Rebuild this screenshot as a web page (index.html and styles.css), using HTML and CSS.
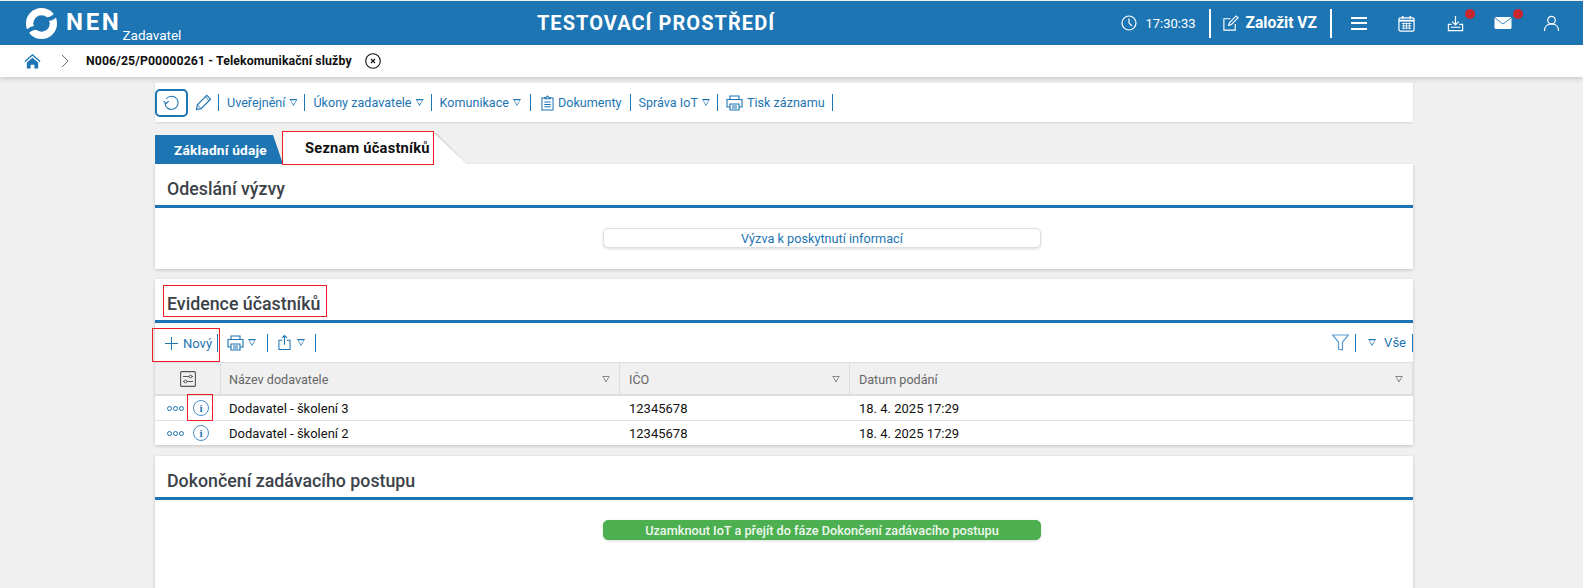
FILE: index.html
```html
<!DOCTYPE html>
<html lang="cs">
  <head>
    <meta charset="UTF-8" />
    <title>NEN Zadavatel</title>
    <link rel="stylesheet" href="styles.css">
  </head>
  <body>
    <header class="topbar">
      <div class="brand">
        <svg class="logo" viewBox="0 0 34 34" width="33" height="33">
          <circle cx="17" cy="17" r="16" fill="#fff"/>
          <circle cx="17" cy="17" r="8.500" fill="#1d75b3"/>
          <path d="M22 10.500Q28 11 33 3L34 9Q28 15 24 14z" fill="#1d75b3"/>
          <path d="M12 23.500Q6 23 1 31L0 25Q6 19 10 20z" fill="#1d75b3"/>
        </svg>
        <span class="brand-name">NEN</span>
        <span class="brand-role">Zadavatel</span>
      </div>
      <div class="env">TESTOVACÍ PROSTŘEDÍ</div>
      <div class="top-tools">
        <svg class="clock" viewBox="0 0 16 16" width="16" height="16"><circle cx="8" cy="8" r="7" fill="none" stroke="#fff" stroke-width="1.2"/><path d="M8 3.500V8l3 3" fill="none" stroke="#fff" stroke-width="1.2"/></svg>
        <span class="time">17:30:33</span>
        <span class="top-sep sep-a"></span>
        <svg class="new-icon" viewBox="0 0 18 18" width="17" height="17"><path d="M14 9.500V16H2V4h7" fill="none" stroke="#fff" stroke-width="1.2"/><path d="M7 11l1-3 7-7 2 2-7 7z" fill="none" stroke="#fff" stroke-width="1.2"/></svg>
        <span class="new-vz">Založit VZ</span>
        <span class="top-sep sep-b"></span>
        <span class="burger"><i></i><i></i><i></i></span>
        <svg class="cal" viewBox="0 0 18 18" width="17" height="17"><rect x="1" y="3" width="16" height="14" rx="1.500" fill="none" stroke="#fff" stroke-width="1.3"/><path d="M1 6h16" stroke="#fff" stroke-width="2"/><path d="M5 1v3M13 1v3" stroke="#fff" stroke-width="1.6"/><path d="M4 9h10M4 11.500h10M4 14h10M6 8v7M9 8v7M12 8v7" stroke="#fff" stroke-width=".9"/></svg>
        <span class="badged dl">
          <svg viewBox="0 0 18 18" width="17" height="17"><path d="M9 1v9M5.500 7L9 10.500 12.500 7" fill="none" stroke="#fff" stroke-width="1.3"/><path d="M5 10H1.500v6.500h15V10H13" fill="none" stroke="#fff" stroke-width="1.3"/><path d="M4 13h10" stroke="#fff" stroke-width="1.100"/></svg>
          <i class="dot"></i>
        </span>
        <span class="badged mail">
          <svg viewBox="0 0 18 14" width="18" height="14"><rect x=".5" y="1" width="17" height="12" rx="1.500" fill="#fff"/><path d="M1 2l8 6 8-6" fill="none" stroke="#1d75b3" stroke-width=".9"/></svg>
          <i class="dot"></i>
        </span>
        <svg class="user" viewBox="0 0 18 18" width="17" height="17"><circle cx="9" cy="5.500" r="4" fill="none" stroke="#fff" stroke-width="1.3"/><path d="M1.500 17c0-4.500 3-7.500 7.500-7.500s7.500 3 7.500 7.500" fill="none" stroke="#fff" stroke-width="1.3"/></svg>
      </div>
    </header>

    <nav class="crumbs">
      <svg class="home" viewBox="0 0 18 16" width="17" height="16"><path d="M9 .5L.5 8l1 1L9 2.500 16.500 9l1-1z" fill="#1d75b3"/><path d="M3 9.500L9 4.500l6 5V16h-4v-4H7v4H3z" fill="#1d75b3"/></svg>
      <svg class="crumb-arrow" viewBox="0 0 8 14" width="8" height="14"><path d="M1 1l6 6-6 6" fill="none" stroke="#666" stroke-width="1"/></svg>
      <span class="crumb-text">N006/25/P00000261 - Telekomunikační služby</span>
      <svg class="crumb-close" viewBox="0 0 16 16" width="16" height="16"><circle cx="8" cy="8" r="7.300" fill="none" stroke="#111" stroke-width="1.100"/><path d="M6 6l4 4M10 6l-4 4" stroke="#111" stroke-width="1.100"/></svg>
    </nav>

    <main class="content">
      <div class="actions">
        <button class="refresh">
          <svg viewBox="0 0 18 18" width="17" height="17"><path d="M3.500 5A7 7 0 1 1 2 9.500" fill="none" stroke="#1d75b3" stroke-width="1.100"/><path d="M.5 7.500L3.500 10 6 7.500" fill="none" stroke="#1d75b3" stroke-width="1.100"/></svg>
        </button>
        <svg class="pencil" viewBox="0 0 18 18" width="17" height="17"><path d="M1.500 16.500l1-5L12.500 1.500l4 4-10 10z" fill="none" stroke="#1d75b3" stroke-width="1.200"/><path d="M2.500 11.500l4 4M11 3l4 4" stroke="#1d75b3" stroke-width="1"/></svg>
        <span class="act">Uveřejnění <i class="tri"></i></span>
        <span class="act">Úkony zadavatele <i class="tri"></i></span>
        <span class="act act-komunikace">Komunikace <i class="tri"></i></span>
        <span class="act act-docs">
          <svg viewBox="0 0 14 17" width="13" height="16"><path d="M4 3H1v13h12V3h-3" fill="none" stroke="#1d75b3" stroke-width="1.100"/><path d="M4 4V2.500h1.500L7 1l1.500 1.500H10V4z" fill="none" stroke="#1d75b3" stroke-width="1.100"/><path d="M3.500 7.500h7M3.500 10h7M3.500 12.500h7" stroke="#1d75b3" stroke-width="1.100"/></svg>
          Dokumenty
        </span>
        <span class="act">Správa IoT <i class="tri"></i></span>
        <span class="act">
          <svg viewBox="0 0 17 16" width="17" height="16"><path d="M4 4V1h9v3M4 12H1V4.500h15V12h-3" fill="none" stroke="#1d75b3" stroke-width="1.100"/><path d="M4 9h9v6H4z" fill="#fff" stroke="#1d75b3" stroke-width="1.100"/><path d="M6 11h5M6 13h5" stroke="#1d75b3" stroke-width="1"/></svg>
          Tisk záznamu
        </span>
      </div>

      <div class="tabs">
        <div class="tab tab-blue">Základní údaje</div>
        <div class="tab tab-white marked">Seznam účastníků</div>
      </div>

      <section class="card card-first">
        <h2 class="card-title"><span>Odeslání výzvy</span></h2>
        <div class="card-btn-row">
          <button class="wide-btn">Výzva k poskytnutí informací</button>
        </div>
      </section>

      <section class="card card-grid">
        <h2 class="card-title"><span class="marked">Evidence účastníků</span></h2>
        <div class="grid-tools">
          <span class="tool tool-new marked">
            <svg viewBox="0 0 14 14" width="13" height="13"><path d="M7 0v14M0 7h14" stroke="#1d75b3" stroke-width="1.100"/></svg>
            Nový
          </span>
          <span class="tool tool-print">
            <svg viewBox="0 0 17 16" width="17" height="16"><path d="M4 4V1h9v3M4 12H1V4.500h15V12h-3" fill="none" stroke="#1d75b3" stroke-width="1.100"/><path d="M4 9h9v6H4z" fill="#fff" stroke="#1d75b3" stroke-width="1.100"/><path d="M6 11h5M6 13h5" stroke="#1d75b3" stroke-width="1"/></svg>
            <i class="tri"></i>
          </span>
          <span class="tool tool-export">
            <svg viewBox="0 0 14 17" width="13" height="17"><path d="M4.500 6H1v10h12V6H9.500" fill="none" stroke="#1d75b3" stroke-width="1.100"/><path d="M7 11V1M4.500 3.500L7 1l2.500 2.500" fill="none" stroke="#1d75b3" stroke-width="1.100"/></svg>
            <i class="tri"></i>
          </span>
          <span class="grid-tools-right">
            <svg class="funnel" viewBox="0 0 17 17" width="17" height="17"><path d="M.5 1h16l-6 7v8l-4-1V8z" fill="none" stroke="#5b9bd0" stroke-width="1.200"/></svg>
            <span class="tool-sep"></span>
            <i class="tri all-tri"></i>
            <span class="all">Vše</span>
          </span>
        </div>
        <div class="grid-head">
          <div class="cell cell-icons">
            <svg viewBox="0 0 16 16" width="16" height="16"><rect x=".6" y=".6" width="14.800" height="14.800" rx="1" fill="none" stroke="#555" stroke-width="1.100"/><path d="M3 5.500h6M12 5.500h1M3 10.500h1M7 10.500h6" stroke="#555"/><circle cx="10.500" cy="5.500" r="1.400" fill="none" stroke="#555"/><circle cx="5.500" cy="10.500" r="1.400" fill="none" stroke="#555"/></svg>
          </div>
          <div class="cell cell-name">Název dodavatele <i class="tri tri-gray"></i></div>
          <div class="cell cell-ico">IČO <i class="tri tri-gray"></i></div>
          <div class="cell cell-date">Datum podání <i class="tri tri-gray"></i></div>
        </div>
        <div class="grid-row">
          <div class="cell cell-icons">
            <span class="dots"><i></i><i></i><i></i></span>
            <span class="info marked-info">i</span>
          </div>
          <div class="cell cell-name">Dodavatel - školení 3</div>
          <div class="cell cell-ico">12345678</div>
          <div class="cell cell-date">18. 4. 2025 17:29</div>
        </div>
        <div class="grid-row">
          <div class="cell cell-icons">
            <span class="dots"><i></i><i></i><i></i></span>
            <span class="info">i</span>
          </div>
          <div class="cell cell-name">Dodavatel - školení 2</div>
          <div class="cell cell-ico">12345678</div>
          <div class="cell cell-date">18. 4. 2025 17:29</div>
        </div>
      </section>

      <section class="card card-last">
        <h2 class="card-title"><span>Dokončení zadávacího postupu</span></h2>
        <div class="card-btn-row">
          <button class="wide-btn green">Uzamknout IoT a přejít do fáze Dokončení zadávacího postupu</button>
        </div>
      </section>
    </main>
  </body>
</html>
```

FILE: styles.css
```css
html,
body {
  margin: 0;
  padding: 0;
  height: 100%;
  overflow: hidden;
}

body {
  font-family: Roboto, "Liberation Sans", sans-serif;
  font-size: 13px;
  background: #f0f0f0;
  color: #111;
}

/* Top bar */
.topbar {
  height: 44px;
  margin-top: 1px;
  background: #1d75b3;
  color: #fff;
  display: flex;
  align-items: center;
  position: relative;
}

.brand {
  display: flex;
  align-items: center;
  width: 450px;
  padding-left: 25px;
  box-sizing: border-box;
  height: 100%;
}

.logo {
  flex: none;
}

.brand-name {
  margin-left: 8px;
  margin-bottom: 3px;
  font-size: 24px;
  font-weight: 700;
  letter-spacing: 2.700px;
}

.brand-role {
  align-self: flex-end;
  margin-left: 1px;
  margin-bottom: 2px;
  font-size: 13.500px;
  line-height: 15px;
}

.env {
  position: absolute;
  left: 0;
  width: 1312px;
  text-align: center;
  font-size: 20px;
  font-weight: 700;
  letter-spacing: 1.050px;
}

.top-tools {
  margin-left: auto;
  display: flex;
  align-items: center;
  padding-right: 23px;
}

.time {
  margin-left: 8px;
  font-size: 13px;
}

.top-sep {
  width: 2px;
  height: 29px;
  background: #fff;
  margin: 0 11px 0 13px;
}

.new-vz {
  margin-left: 7px;
  font-size: 15.600px;
  font-weight: 700;
}

.burger {
  display: flex;
  flex-direction: column;
  gap: 3.500px;
  width: 16px;
  margin: 0 31px 0 8px;
}

.burger i {
  height: 2px;
  background: #fff;
  display: block;
}

.cal {
  margin-right: 32px;
}

.badged {
  position: relative;
  display: flex;
}

.dl {
  margin-right: 30px;
}

.mail {
  margin-right: 31px;
}

.dot {
  position: absolute;
  top: -6px;
  right: -11px;
  width: 10px;
  height: 10px;
  border-radius: 50%;
  background: #c9252c;
}

.mail .dot {
  top: -7px;
}

/* Breadcrumb */
.crumbs {
  height: 32px;
  background: #fff;
  display: flex;
  align-items: center;
  padding-left: 24px;
  box-shadow: 0 2px 5px rgba(0, 0, 0, 0.16);
  position: relative;
}

.crumb-arrow {
  margin-left: 20px;
}

.crumb-text {
  margin-left: 17px;
  font-size: 12.300px;
  font-weight: 700;
  letter-spacing: 0.100px;
}

.crumb-close {
  margin-left: 13px;
}

/* Page body */
.content {
  width: 1258px;
  margin-left: 155px;
  padding-top: 6px;
}

.actions {
  height: 39px;
  background: #fff;
  display: flex;
  align-items: center;
  box-shadow: 0 1px 2px rgba(0, 0, 0, 0.14);
  color: #1d75b3;
}

.refresh {
  width: 33px;
  height: 28px;
  padding: 0;
  margin: 0 7px 0 0;
  background: #fff;
  border: 2px solid #1d75b3;
  border-radius: 5px;
  display: flex;
  align-items: center;
  justify-content: center;
}

.pencil {
  margin-right: 6px;
}

.act {
  display: flex;
  align-items: center;
  gap: 4px;
  height: 17px;
  padding: 0 7px 0 8px;
  border-left: 1px solid #1d75b3;
  font-size: 12.600px;
  white-space: nowrap;
}

.act:last-child {
  border-right: 1px solid #1d75b3;
}

.act-komunikace {
  padding-right: 9px;
}

.act-docs {
  padding: 0 8px 0 10px;
}

.tri {
  display: inline-block;
  width: 8px;
  height: 7px;
  background: #1d75b3;
  clip-path: polygon(0 0, 100% 0, 50% 100%, 0 0, 15% 18%, 50% 78%, 85% 18%, 15% 18%);
  flex: none;
}

.tri-gray {
  background: #666;
  margin-left: auto;
}

/* Tabs */
.tabs {
  display: flex;
  margin-top: 12px;
  height: 30px;
}

.tab {
  display: flex;
  align-items: center;
  font-weight: 700;
  box-sizing: border-box;
}

.tab-blue {
  width: 128px;
  padding-left: 19px;
  margin-top: 1px;
  background: #1d75b3;
  color: #fff;
  font-size: 13.700px;
  letter-spacing: 0.200px;
  clip-path: polygon(0 0, 118px 0, 100% 100%, 0 100%);
}

.tab-white {
  position: relative;
  width: 150px;
  height: 32px;
  margin-top: -2px;
  padding-left: 22px;
  background: #fff;
  font-size: 14.700px;
  letter-spacing: 0.200px;
  white-space: nowrap;
}

.tab-white::after {
  content: "";
  position: absolute;
  left: calc(100% + 1px);
  top: 1px;
  width: 33px;
  height: 31px;
  background: linear-gradient(to top right, #fff 49%, #d8d8d8 50%, #f0f0f0 75%);
  clip-path: polygon(3px 0, 100% 100%, 0 100%, 0 0);
}

.marked {
  outline: 1px solid #ee1c25;
}

/* Cards */
.card {
  background: #fff;
  margin-bottom: 10px;
  box-shadow: 0 1px 3px rgba(0, 0, 0, 0.2);
}

.card-grid {
  margin-bottom: 11px;
}

.card-last {
  margin-bottom: 0;
  height: 140px;
}

.card-title {
  margin: 0;
  height: 33px;
  padding: 8px 0 0 12px;
  display: flex;
  align-items: center;
  border-bottom: 3px solid #1d75b3;
  font-size: 17.800px;
  font-weight: 500;
  color: #3c4249;
}

.card-title .marked {
  width: 162px;
  height: 30px;
  margin-left: -3px;
  margin-bottom: 5px;
  padding: 7px 0 0 3px;
  line-height: 21px;
  box-sizing: border-box;
  white-space: nowrap;
}

.card-btn-row {
  height: 61px;
  padding: 20px 0 0 448px;
  box-sizing: border-box;
  display: flex;
}

.wide-btn {
  width: 438px;
  height: 20px;
  padding: 0;
  border: 1px solid #dedede;
  border-radius: 5px;
  background: #fff;
  box-shadow: 0 1px 3px rgba(0, 0, 0, 0.14);
  color: #1d75b3;
  font-family: inherit;
  font-size: 12.700px;
}

.green {
  background: #4caf50;
  border-color: #4caf50;
  color: #eef8ee;
  font-weight: 500;
}

/* Grid */
.grid-tools {
  height: 39px;
  display: flex;
  align-items: center;
  color: #1d75b3;
  font-size: 13px;
}

.tool {
  display: flex;
  align-items: center;
  height: 18px;
  border-right: 1px solid #1d75b3;
}

.tool-new {
  position: relative;
  width: 66px;
  height: 32px;
  box-sizing: border-box;
  margin: 5px 0 0 -2px;
  padding: 0 0 4px 12px;
  gap: 5px;
  border-right: none;
}

.tool-new::after {
  content: "";
  position: absolute;
  right: 1px;
  top: 5px;
  height: 18px;
  width: 1px;
  background: #1d75b3;
}

.tool-print {
  padding: 0 11px 0 8px;
  gap: 4px;
}

.tool-export {
  padding: 0 10px;
  gap: 6px;
}

.grid-tools-right {
  margin-left: auto;
  display: flex;
  align-items: center;
  height: 18px;
  border-right: 1px solid #1d75b3;
  padding-right: 6px;
}

.funnel {
  margin-right: 6px;
}

.tool-sep {
  width: 1px;
  height: 18px;
  background: #1d75b3;
  margin-right: 12px;
}

.all-tri {
  margin-right: 8px;
}

.grid-head,
.grid-row {
  display: flex;
  align-items: stretch;
  box-sizing: border-box;
}

.grid-head {
  height: 34px;
  background: #f0f0f0;
  border-top: 1px solid #ddd;
  border-bottom: 2px solid #ddd;
  color: #666;
}

.grid-head .cell {
  border-right: 1px solid #ddd;
  font-size: 12.600px;
  padding-top: 1px;
}

.grid-row {
  height: 25px;
  border-bottom: 1px solid #e2e2e2;
  color: #111;
}

.grid-row:last-child {
  height: 24px;
  border-bottom: none;
}

.cell {
  display: flex;
  align-items: center;
  box-sizing: border-box;
  padding-left: 9px;
  padding-right: 9px;
  font-size: 13px;
}

.cell-icons {
  width: 66px;
  padding: 0;
}

.grid-head .cell-icons {
  justify-content: center;
}

.grid-row .cell-icons {
  padding-left: 12px;
}

.cell-name {
  width: 399px;
  padding-left: 8px;
}

.cell-ico {
  width: 230px;
}

.cell-date {
  flex: 1;
}

.dots {
  display: flex;
  gap: 1px;
  margin-right: 9px;
}

.dots i {
  width: 3px;
  height: 3px;
  border: 1px solid #1d75b3;
  border-radius: 50%;
  display: block;
}

.info {
  position: relative;
  width: 14px;
  height: 14px;
  border: 1px solid #4a90c8;
  border-radius: 50%;
  color: #1d75b3;
  font-family: "Liberation Serif", serif;
  font-size: 11px;
  font-weight: 700;
  line-height: 14px;
  text-align: center;
}

.marked-info::after {
  content: "";
  position: absolute;
  left: -6px;
  top: -6px;
  width: 24px;
  height: 25px;
  outline: 1px solid #ee1c25;
}
```
